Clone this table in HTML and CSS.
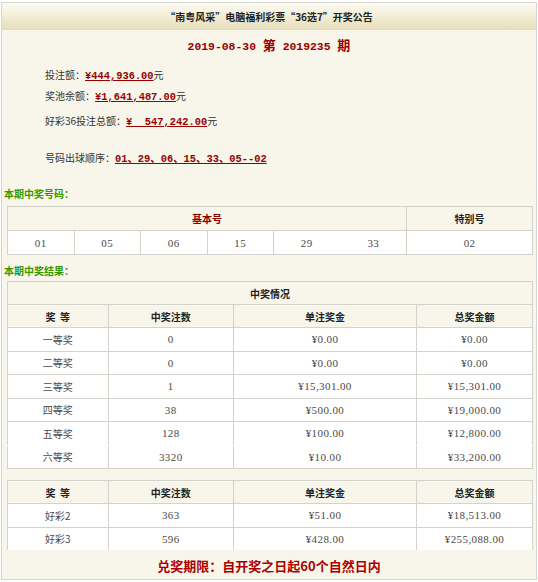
FILE: index.html
```html
<!DOCTYPE html>
<html lang="zh-CN">
<head>
<meta charset="utf-8">
<title>开奖公告</title>
<link rel="stylesheet" href="styles.css">
</head>
<body>
<div class="board">
  <div class="bar">“南粤风采”电脑福利彩票“36选7”开奖公告</div>
  <div class="issue"><span class="mono">2019-08-30 </span>第<span class="mono"> 2019235 </span>期</div>
  <div class="info">
    <p class="line">投注额：<span class="amt">¥444,936.00</span>元</p>
    <p class="line l2">奖池余额：<span class="amt">¥1,641,487.00</span>元</p>
    <p class="line l3">好彩36投注总额：<span class="amt">¥  547,242.00</span>元</p>
    <p class="line l4">号码出球顺序：<span class="amt">01、29、06、15、33、05--02</span></p>
  </div>
  <div class="label">本期中奖号码：</div>
  <table class="grid balls">
    <colgroup>
      <col class="b"><col class="b"><col class="b"><col class="b"><col class="b"><col class="b"><col class="s">
    </colgroup>
    <tr class="head">
      <td colspan="6" class="basic">基本号</td>
      <td>特别号</td>
    </tr>
    <tr>
      <td>01</td><td>05</td><td>06</td><td>15</td><td class="nosep">29</td><td>33</td><td>02</td>
    </tr>
  </table>
  <div class="label l-result">本期中奖结果：</div>
  <table class="grid prizes">
    <colgroup>
      <col class="c1"><col class="c2"><col class="c3"><col class="c4">
    </colgroup>
    <tr class="head"><td colspan="4">中奖情况</td></tr>
    <tr class="head">
      <td>奖&nbsp;&nbsp;等</td><td>中奖注数</td><td>单注奖金</td><td>总奖金额</td>
    </tr>
    <tr><td>一等奖</td><td>0</td><td>¥0.00</td><td>¥0.00</td></tr>
    <tr><td>二等奖</td><td>0</td><td>¥0.00</td><td>¥0.00</td></tr>
    <tr><td>三等奖</td><td>1</td><td>¥15,301.00</td><td>¥15,301.00</td></tr>
    <tr><td>四等奖</td><td>38</td><td>¥500.00</td><td>¥19,000.00</td></tr>
    <tr class="nosep-row"><td>五等奖</td><td>128</td><td>¥100.00</td><td>¥12,800.00</td></tr>
    <tr><td>六等奖</td><td>3320</td><td>¥10.00</td><td>¥33,200.00</td></tr>
  </table>
  <table class="grid prizes extra">
    <colgroup>
      <col class="c1"><col class="c2"><col class="c3"><col class="c4">
    </colgroup>
    <tr class="head">
      <td>奖&nbsp;&nbsp;等</td><td>中奖注数</td><td>单注奖金</td><td>总奖金额</td>
    </tr>
    <tr><td>好彩2</td><td>363</td><td>¥51.00</td><td>¥18,513.00</td></tr>
    <tr><td>好彩3</td><td>596</td><td>¥428.00</td><td>¥255,088.00</td></tr>
  </table>
  <div class="deadline">兑奖期限：自开奖之日起60个自然日内</div>
</div>
</body>
</html>
```
FILE: styles.css
```css
html, body {
  margin: 0;
  padding: 0;
  background: #ffffff;
}

body {
  font-family: "Noto Sans CJK SC", "Liberation Serif", sans-serif;
  font-size: 10px;
  color: #333333;
}

.board {
  margin: 2px 1px 0 1px;
  width: 534px;
  height: 576px;
  border: 1px solid #d6d6d0;
  background: #f8f6ea;
}

.bar {
  height: 27px;
  line-height: 27px;
  text-align: center;
  font-weight: bold;
  color: #222222;
  background: linear-gradient(#fbfaf3 0%, #f3efd8 45%, #e6ddb8 100%);
}

.issue {
  height: 30px;
  line-height: 30px;
  text-align: center;
  font-size: 13px;
  font-weight: bold;
  color: #990000;
}

.mono {
  font-family: "Liberation Mono", monospace;
  font-size: 11.4px;
  white-space: pre;
}

.info {
  padding: 5px 0 0 43px;
}

.line {
  margin: 0;
  height: 20px;
  line-height: 20px;
  color: #333333;
}

.l2 { margin-top: 1px; }
.l3 { margin-top: 5px; }
.l4 { margin-top: 17px; }

.amt {
  font-family: "Liberation Mono", "Noto Sans CJK SC", monospace;
  font-size: 10.4px;
  font-weight: bold;
  color: #990000;
  text-decoration: underline;
  white-space: pre;
}

.label {
  margin-top: 16px;
  padding-left: 2px;
  height: 20px;
  line-height: 20px;
  font-weight: bold;
  color: #339900;
}

.l-result {
  margin-top: 6px;
}

.grid {
  border-collapse: collapse;
  margin-left: 5px;
  width: 525px;
  table-layout: fixed;
  background: #ffffff;
}

.grid td {
  border: 1px solid #d3d3cb;
  padding: 0;
  height: 22px;
  text-align: center;
  vertical-align: middle;
  font-family: "Liberation Serif", "Noto Sans CJK SC", serif;
  font-size: 11px;
  letter-spacing: 0.4px;
  color: #4a4a4a;
}

.grid .head td {
  background: #f8f6ea;
  font-family: "Noto Sans CJK SC", sans-serif;
  font-size: 10px;
  letter-spacing: 0;
  font-weight: bold;
  color: #222222;
}

.balls {
  margin-top: 2px;
}

.balls td {
  height: 23px;
}

.balls .b { width: 66.5px; }
.balls .s { width: 126px; }

.grid .head .basic {
  color: #8b0000;
}

.balls td.nosep {
  border-right-color: #ffffff;
}

.prizes {
  margin-top: 0;
}

.prizes td {
  height: 22.5px;
}

.prizes .head td {
  height: 22px;
}

.prizes td:first-child {
  font-family: "Noto Sans CJK SC", "Liberation Serif", sans-serif;
  font-size: 10px;
  letter-spacing: 0;
}

.c1 { width: 100.5px; }
.c2 { width: 125.5px; }
.c3 { width: 183px; }
.c4 { width: 116px; }

.prizes .nosep-row td {
  border-bottom-color: #ffffff;
}

.extra {
  margin-top: 11px;
}

.extra tr:last-child td {
  border-bottom: none;
}

.deadline {
  height: 31px;
  line-height: 31px;
  text-align: center;
  font-size: 13px;
  font-weight: bold;
  color: #aa0000;
}
```
